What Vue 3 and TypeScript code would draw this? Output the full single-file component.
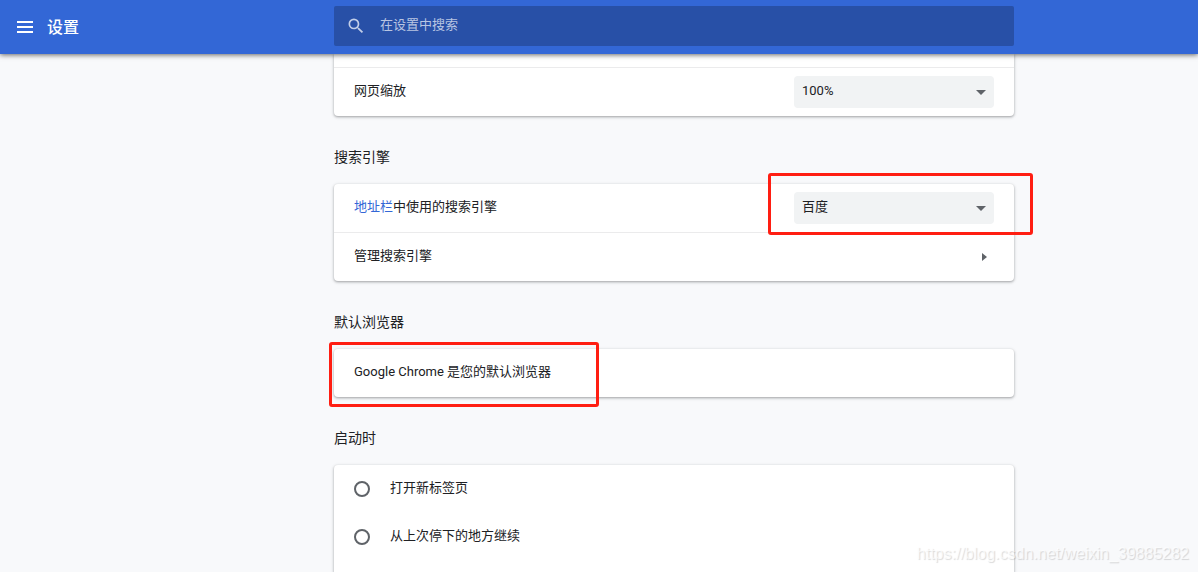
<script setup lang="ts">
import { ref } from 'vue'

interface StartupOption {
  value: string
  label: string
}

const zoom = ref<string>('100%')
const engine = ref<string>('百度')
const query = ref<string>('')
const startup = ref<string>('')

const zoomLevels: string[] = ['75%', '100%', '125%']
const engines: string[] = ['百度', 'Google', '必应']
const startupOptions: StartupOption[] = [
  { value: 'new-tab', label: '打开新标签页' },
  { value: 'continue', label: '从上次停下的地方继续' },
]
</script>

<template>
  <div class="page">
    <header class="toolbar">
      <div class="brand">
        <button class="menu" type="button" aria-label="主菜单">
          <svg width="16" height="12" viewBox="0 0 16 12" aria-hidden="true">
            <path d="M0 0h16v2H0zM0 5h16v2H0zM0 10h16v2H0z" fill="#fff" />
          </svg>
        </button>
        <h1>设置</h1>
      </div>
      <label class="search">
        <svg width="20" height="20" viewBox="0 0 24 24" aria-hidden="true">
          <path
            d="M15.5 14h-.79l-.28-.27A6.471 6.471 0 0 0 16 9.5 6.5 6.5 0 1 0 9.5 16c1.61 0 3.09-.59 4.23-1.57l.27.28v.79l5 4.99L20.49 19l-4.99-5zm-6 0C7.01 14 5 11.99 5 9.5S7.01 5 9.5 5 14 7.01 14 9.5 11.99 14 9.5 14z"
            fill="#c2cee8"
          />
        </svg>
        <input v-model="query" type="text" placeholder="在设置中搜索" aria-label="在设置中搜索" />
      </label>
    </header>

    <main class="content">
      <div class="column">
        <section class="card card-top">
          <div class="row-end"></div>
          <div class="row divided">
            <label class="text" for="zoom">网页缩放</label>
            <div class="select">
              <select id="zoom" v-model="zoom">
                <option v-for="z in zoomLevels" :key="z">{{ z }}</option>
              </select>
              <svg class="arrow" width="10" height="5" viewBox="0 0 10 5" aria-hidden="true">
                <path d="M0 0h10L5 5z" fill="#5f6368" />
              </svg>
            </div>
          </div>
        </section>

        <h2>搜索引擎</h2>
        <section class="card">
          <div class="row">
            <label class="text" for="engine"><a href="#omnibox">地址栏</a>中使用的搜索引擎</label>
            <div class="select">
              <select id="engine" v-model="engine">
                <option v-for="e in engines" :key="e">{{ e }}</option>
              </select>
              <svg class="arrow" width="10" height="5" viewBox="0 0 10 5" aria-hidden="true">
                <path d="M0 0h10L5 5z" fill="#5f6368" />
              </svg>
              <span class="mark mark-engine"></span>
            </div>
          </div>
          <button class="row divided link-row" type="button">
            <span class="text">管理搜索引擎</span>
            <svg width="5" height="8" viewBox="0 0 5 8" aria-hidden="true">
              <path d="M0 0l5 4-5 4z" fill="#5f6368" />
            </svg>
          </button>
        </section>

        <h2>默认浏览器</h2>
        <section class="card">
          <div class="row">
            <span class="text">Google Chrome 是您的默认浏览器</span>
          </div>
          <span class="mark mark-browser"></span>
        </section>

        <h2>启动时</h2>
        <section class="card card-last">
          <label v-for="o in startupOptions" :key="o.value" class="row option">
            <input v-model="startup" type="radio" name="startup" :value="o.value" />
            <span class="text">{{ o.label }}</span>
          </label>
        </section>
      </div>
    </main>

    <div class="watermark">https://blog.csdn.net/weixin_39885282</div>
  </div>
</template>

<style>
body {
  margin: 0;
  background: #f8f9fa;
}
</style>

<style scoped>
.page {
  position: relative;
  display: flex;
  flex-direction: column;
  height: 100vh;
  overflow: hidden;
  background: #f8f9fb;
  color: #202124;
  font-family: Roboto, 'Noto Sans CJK SC', sans-serif;
  font-size: 13px;
  line-height: 20px;
}

.toolbar,
.content {
  display: grid;
  grid-template-columns: 334px minmax(0, 680px) 1fr;
}

.toolbar {
  position: relative;
  z-index: 1;
  flex: none;
  align-items: center;
  height: 54px;
  background: #3367d6;
  box-shadow: 0 1px 5px rgba(0, 0, 0, 0.6);
}

.brand {
  display: flex;
  align-items: center;
  gap: 14px;
  padding-left: 17px;
}

.menu {
  display: flex;
  padding: 0;
  border: 0;
  background: none;
}

h1 {
  margin: 0;
  padding-top: 2px;
  color: #fff;
  font-size: 16px;
  font-weight: 500;
  line-height: 24px;
}

.search {
  display: flex;
  align-items: center;
  gap: 14px;
  height: 40px;
  margin-bottom: 2px;
  padding-left: 12px;
  border-radius: 2px;
  background: #2850a7;
}

.search input {
  flex: 1;
  min-width: 0;
  padding: 0 0 2px;
  border: 0;
  outline: 0;
  background: none;
  color: #fff;
  font: inherit;
}

.search input::placeholder {
  color: #b8c5e2;
  opacity: 1;
}

.content {
  flex: 1;
  min-height: 0;
}

.column {
  grid-column: 2;
  display: flex;
  flex-direction: column;
}

.card {
  position: relative;
  border-radius: 4px;
  background: #fff;
  box-shadow:
    0 1px 2px rgba(60, 64, 67, 0.3),
    0 1px 3px 1px rgba(60, 64, 67, 0.15);
}

.card-top {
  border-radius: 0 0 4px 4px;
}

.card-last {
  flex: 1;
  border-radius: 4px 4px 0 0;
}

.row-end {
  height: 13px;
}

.row {
  display: flex;
  align-items: center;
  justify-content: space-between;
  min-height: 48px;
  padding: 0 20px;
}

.text {
  padding-bottom: 2px;
}

.divided {
  border-top: 1px solid #ebebec;
}

.link-row {
  box-sizing: content-box;
  width: calc(100% - 47px);
  padding-right: 27px;
  border-width: 1px 0 0;
  background: none;
  color: inherit;
  font: inherit;
}

h2 {
  margin: 0;
  padding: 31px 0 17px;
  font-size: 14px;
  font-weight: 400;
  line-height: 20px;
}

a {
  color: #3367d6;
  text-decoration: none;
}

.select {
  position: relative;
  width: 200px;
}

select {
  display: block;
  width: 100%;
  height: 32px;
  padding: 0 24px 2px 8px;
  border: 0;
  border-radius: 4px;
  appearance: none;
  background: #f1f3f4;
  color: inherit;
  font: inherit;
}

.arrow {
  position: absolute;
  top: 14px;
  right: 8px;
  pointer-events: none;
}

.option {
  justify-content: flex-start;
  gap: 20px;
}

.option input {
  box-sizing: border-box;
  width: 16px;
  height: 16px;
  margin: 0;
  border: 2px solid #5f6368;
  border-radius: 50%;
  appearance: none;
}

.option input:checked {
  border-width: 5px;
  border-color: #3367d6;
}

.mark {
  position: absolute;
  border: 3px solid #ff1e12;
  border-radius: 3px;
  pointer-events: none;
}

.mark-engine {
  inset: -19px -39px -11px -26px;
}

.mark-browser {
  top: -7px;
  bottom: -10px;
  left: -5px;
  width: 264px;
}

.watermark {
  position: absolute;
  right: 9px;
  bottom: 8px;
  z-index: 2;
  color: rgba(255, 255, 255, 0.7);
  font-family: 'Liberation Sans', Arial, sans-serif;
  font-size: 16px;
  text-shadow: 1px 1px 1px rgba(0, 0, 0, 0.15);
}
</style>
